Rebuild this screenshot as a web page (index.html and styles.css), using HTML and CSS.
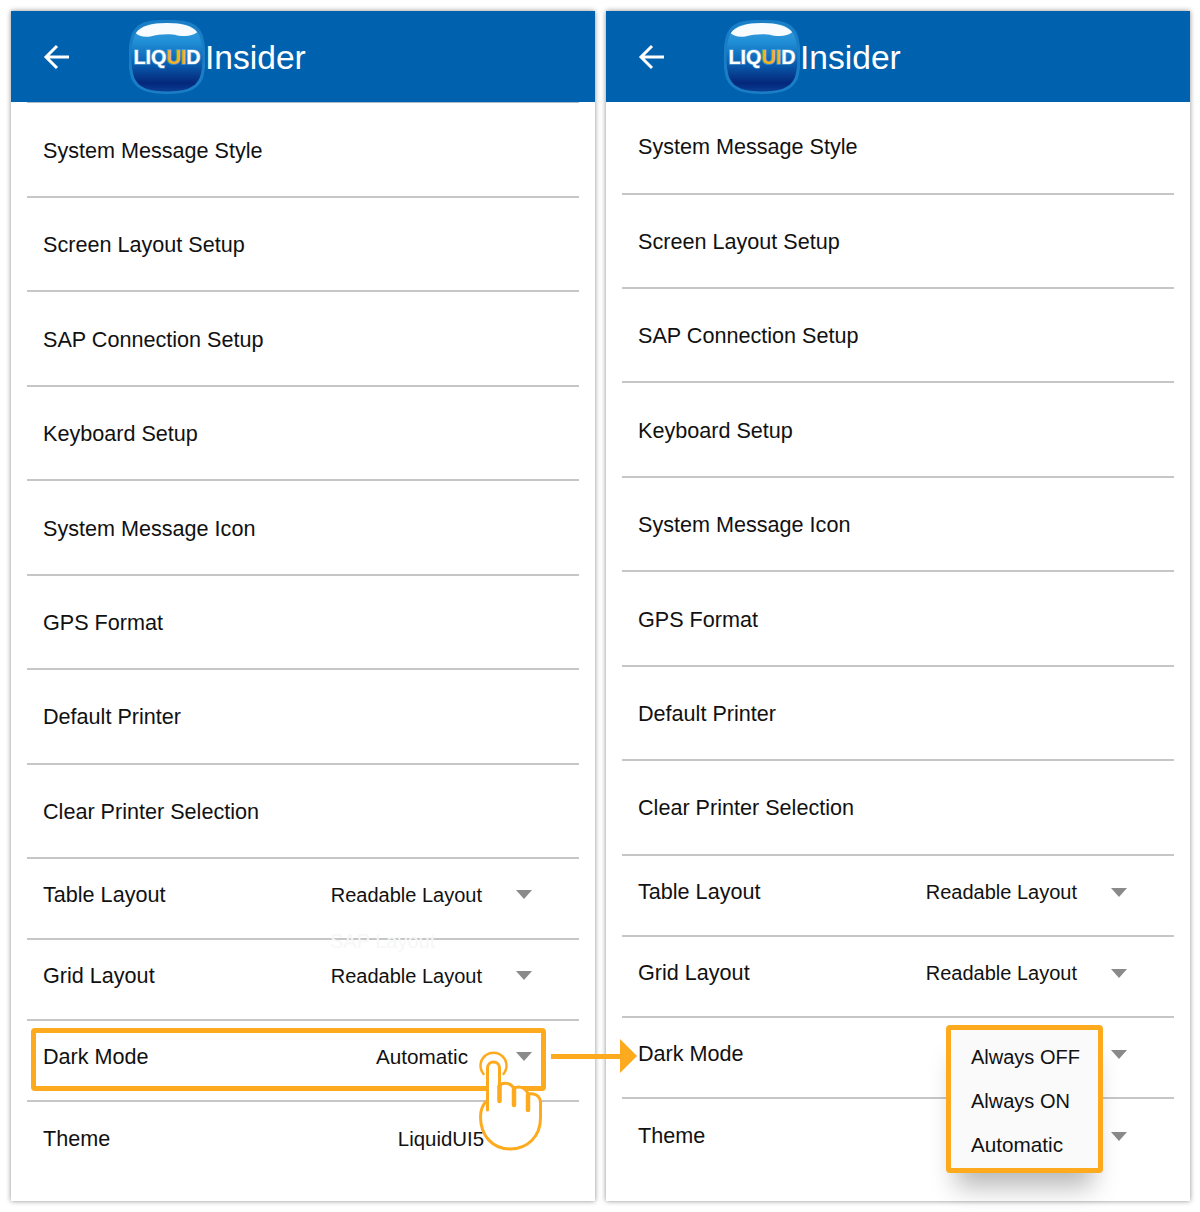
FILE: index.html
```html
<!DOCTYPE html>
<html lang="en">
<head>
<meta charset="utf-8">
<title>Liquid Insider settings</title>
<link rel="stylesheet" href="styles.css">
</head>
<body>
<svg class="defs" width="0" height="0" aria-hidden="true">
  <defs>
    <linearGradient id="blobFill" x1="0" y1="0" x2="0" y2="1">
      <stop offset="0" stop-color="#3f9fdc"/>
      <stop offset="0.28" stop-color="#1f8ed6"/>
      <stop offset="0.6" stop-color="#0a5cae"/>
      <stop offset="0.88" stop-color="#04277a"/>
      <stop offset="1" stop-color="#0a3f94"/>
    </linearGradient>
    <symbol id="logo" viewBox="1.500 1 73 72" preserveAspectRatio="none">
      <path d="M38 1C57 1 67 3 72 15C76 26 76 48 72 59C67 70 55 73 38 73C21 73 9 70 4 59C0 48 0 26 4 15C9 3 19 1 38 1Z" fill="#1a7ec6"/>
      <path d="M38 4C55 4 65 6 69.500 17C73 27 73 47 69.500 57C65 68 54 70.500 38 70.500C22 70.500 11 68 6.500 57C3 47 3 27 6.500 17C11 6 21 4 38 4Z" fill="url(#blobFill)"/>
      <path d="M8 14C12 7 24 4 38 4C52 4 63 7 67 13C62 17 56 17 48 16C40 14 30 15 22 17C16 18 11 17 8 14Z" fill="#f7fbfd"/>
      <text class="logo-word" x="38" y="44" text-anchor="middle">LIQ<tspan class="logo-accent">UI</tspan>D</text>
    </symbol>
    <symbol id="back" viewBox="0 0 28 28">
      <path d="M26 14H3M14 3L3 14L14 25" fill="none" stroke="#fff" stroke-width="3"/>
    </symbol>
  </defs>
</svg>
<main class="page">
  <section class="panel panel-left">
    <header class="app-bar">
      <svg class="back" width="28" height="28"><use href="#back"/></svg>
      <svg class="logo" width="76" height="74"><use href="#logo"/></svg>
      <span class="brand">Insider</span>
    </header>
    <div class="list">
      <div class="row row-first">System Message Style</div>
      <div class="row">Screen Layout Setup</div>
      <div class="row">SAP Connection Setup</div>
      <div class="row">Keyboard Setup</div>
      <div class="row">System Message Icon</div>
      <div class="row">GPS Format</div>
      <div class="row">Default Printer</div>
      <div class="row">Clear Printer Selection</div>
      <div class="row row-select"><span>Table Layout</span><span class="value">Readable Layout</span><i class="caret"></i></div>
      <div class="row row-select"><span>Grid Layout</span><span class="value">Readable Layout</span><i class="caret"></i></div>
      <div class="row row-select"><span>Dark Mode</span><span class="value value-auto">Automatic</span><i class="caret"></i></div>
      <div class="row row-select row-last"><span>Theme</span><span class="value value-theme">LiquidUI5</span><i class="caret"></i></div>
    </div>
    <span class="ghost">SAP Layout</span>
    <div class="highlight"></div>
  </section>
  <section class="panel panel-right">
    <header class="app-bar">
      <svg class="back" width="28" height="28"><use href="#back"/></svg>
      <svg class="logo" width="76" height="74"><use href="#logo"/></svg>
      <span class="brand">Insider</span>
    </header>
    <div class="list">
      <div class="row row-first">System Message Style</div>
      <div class="row">Screen Layout Setup</div>
      <div class="row">SAP Connection Setup</div>
      <div class="row">Keyboard Setup</div>
      <div class="row">System Message Icon</div>
      <div class="row">GPS Format</div>
      <div class="row">Default Printer</div>
      <div class="row">Clear Printer Selection</div>
      <div class="row row-select"><span>Table Layout</span><span class="value">Readable Layout</span><i class="caret"></i></div>
      <div class="row row-select"><span>Grid Layout</span><span class="value">Readable Layout</span><i class="caret"></i></div>
      <div class="row row-select"><span>Dark Mode</span><i class="caret caret-solo"></i></div>
      <div class="row row-select row-last"><span>Theme</span><i class="caret caret-solo"></i></div>
    </div>
    <div class="popup">
      <div class="popup-item">Always OFF</div>
      <div class="popup-item">Always ON</div>
      <div class="popup-item popup-item-wide">Automatic</div>
    </div>
  </section>
  <div class="connector"><span class="connector-line"></span><span class="connector-head"></span></div>
  <svg class="hand" width="100" height="130" viewBox="0 0 100 130">
    <path d="M23.500 44A13 13 0 1 1 43.500 44" fill="none" stroke="#fdaa1e" stroke-width="2.500" stroke-linecap="round"/>
    <path d="M27.500 70V38C27.500 30 39.500 30 39.500 38V56C42 52 51 52 54 59C57 56 65 56 68 64C72 63 80.500 64 80.500 73V88C80.500 106 68 119 50 119C33 119 20.500 106 20.500 87C20.500 80 23 74 27.500 70Z" fill="#fff" stroke="#fdaa1e" stroke-width="3" stroke-linejoin="round"/>
    <path d="M27.500 68V80" fill="none" stroke="#fdaa1e" stroke-width="3" stroke-linecap="round"/>
    <path d="M39.500 56V71M54 60V75M68 65V80" fill="none" stroke="#fdaa1e" stroke-width="4.500" stroke-linecap="round"/>
  </svg>
</main>
</body>
</html>
```
FILE: styles.css
```css
* { box-sizing: border-box; }
html, body { margin: 0; padding: 0; background: #fff; }
body { font-family: "Liberation Sans", Arial, sans-serif; color: #111; }
.defs { position: absolute; }
.page {
  position: relative;
  display: flex;
  gap: 11px;
  width: 1200px;
  height: 1212px;
  padding: 11px 10px 11px 11px;
}
.panel {
  position: relative;
  width: 584px;
  height: 1190px;
  background: #fff;
  box-shadow: 0 0 5px rgba(0, 0, 0, .45);
}
.app-bar {
  display: flex;
  align-items: center;
  height: 91px;
  padding-left: 32px;
  background: #0061af;
}
.back { margin-right: 58px; }
.brand {
  padding-top: 2px;
  color: #fff;
  font-size: 33.600px;
  line-height: 40px;
}
.logo-word {
  font: 700 19px "Liberation Sans", Arial, sans-serif;
  fill: #fff;
  stroke: rgba(150, 205, 240, .45);
  stroke-width: 1.500px;
  paint-order: stroke;
}
.logo-accent { fill: #f5b21c; }
.list { padding: 0 16px; }
.row {
  display: flex;
  align-items: center;
  height: 94.44px;
  padding: 2px 0 0 16px;
  border-bottom: 2px solid #c6c6c6;
  font-size: 21.6px;
  line-height: 26px;
}
.panel-left .row-first { height: 96px; border-top: 1px solid #a9bccb; }
.panel-right .row-first { height: 92.600px; padding-top: 0; }
.row.row-select { height: 81px; padding: 0 0 8px 16px; }
.panel-right .row.row-select { padding-bottom: 6px; }
.row-last { border-bottom: 0; }
.value { margin-left: auto; margin-right: 34px; font-size: 20px; }
.value-auto { margin-right: 48px; font-size: 20.700px; }
.value-theme { margin-right: 32px; font-size: 20.400px; }
.caret {
  width: 0;
  height: 0;
  border-left: 8px solid transparent;
  border-right: 8px solid transparent;
  border-top: 9px solid #8a8a8a;
}
.caret-solo { margin-left: auto; }
.row .caret { margin-right: 47px; }
.ghost {
  position: absolute;
  left: 319px;
  top: 919px;
  color: #f7f7f7;
  font-size: 20px;
}
.highlight {
  position: absolute;
  left: 20px;
  top: 1017px;
  width: 515px;
  height: 63px;
  border: 5px solid #fdaa1e;
  border-radius: 4px;
}
.popup {
  position: absolute;
  left: 340px;
  top: 1014px;
  width: 157px;
  height: 148px;
  padding: 5px 0 0 20px;
  background: #fafafa;
  border: 5px solid #fdaa1e;
  border-radius: 4px;
  box-shadow: 0 24px 24px -10px rgba(0, 0, 0, .28);
}
.popup-item {
  height: 44px;
  line-height: 44px;
  font-size: 20px;
}
.popup-item-wide { font-size: 20.700px; }
.connector {
  position: absolute;
  left: 551px;
  top: 1039px;
  display: flex;
  align-items: center;
}
.connector-line { width: 69px; height: 5px; background: #fdaa1e; }
.connector-head {
  width: 0;
  height: 0;
  border-top: 17px solid transparent;
  border-bottom: 17px solid transparent;
  border-left: 17px solid #fdaa1e;
}
.hand { position: absolute; left: 460px; top: 1030px; }
```
